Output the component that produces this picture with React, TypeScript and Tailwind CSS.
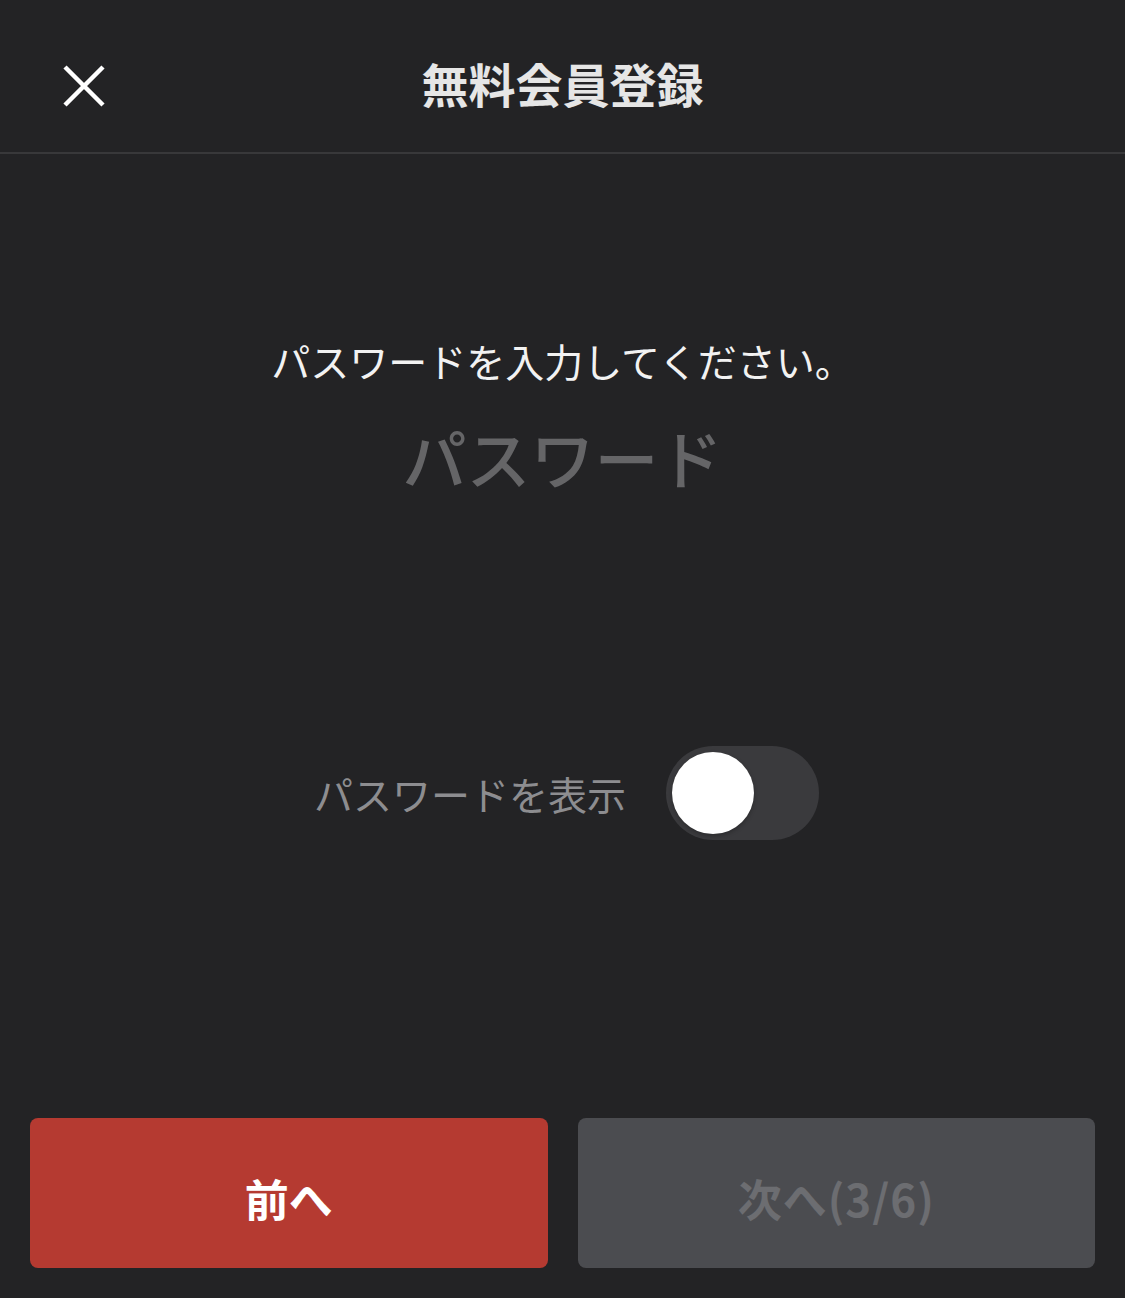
import React from 'react'

function CloseIcon() {
  return (
    <svg width="46" height="46" viewBox="0 0 46 46" fill="none" stroke="currentColor" strokeWidth="4.5" strokeLinecap="butt">
      <path d="M4 4 L42 42 M42 4 L4 42" />
    </svg>
  )
}

export default function App() {
  const font = { fontFamily: '"Noto Sans CJK JP", "Noto Sans", sans-serif' }

  return (
    <div className="h-[1298px] w-full bg-[#232325] flex flex-col text-white" style={font}>
      {/* header */}
      <header className="h-[154px] shrink-0 border-b-2 border-[#38383a] relative flex items-center justify-center pt-[12px]">
        <button className="absolute left-[61px] top-[63px] text-white">
          <CloseIcon />
        </button>
        <h1 className="text-[47px] font-bold text-[#e6e6e6] leading-none">無料会員登録</h1>
      </header>

      {/* body */}
      <main className="flex flex-col items-center pt-[178px]">
        <p className="text-[39px] leading-[56px] text-[#f2f2f2]">パスワードを入力してください。</p>
        <input
          type="password"
          placeholder="パスワード"
          className="mt-[26px] w-full bg-transparent text-center text-[64px] font-medium leading-[84px] outline-none placeholder:text-[#656567] text-white"
        />
        <div className="mt-[248px] flex items-center gap-[40px] pl-[8px]">
          <span className="text-[39px] text-[#8d8d90] leading-none">パスワードを表示</span>
          <div className="w-[153px] h-[94px] rounded-full bg-[#3a3a3d] p-[6px] flex items-center">
            <div className="w-[82px] h-[82px] rounded-full bg-white shadow-[0_2px_4px_rgba(0,0,0,0.25)]" />
          </div>
        </div>
      </main>

      <div className="flex-1" />

      {/* footer buttons */}
      <footer className="flex gap-[30px] px-[30px] pb-[30px]">
        <button className="flex-1 h-[150px] rounded-[8px] bg-[#b53a31] text-[44px] font-bold text-white pt-[10px]">
          前へ
        </button>
        <button className="flex-1 h-[150px] rounded-[8px] bg-[#4b4c50] text-[44px] font-bold text-[#6c6d71] pt-[10px] tracking-[1px]">
          次へ(3/6)
        </button>
      </footer>
    </div>
  )
}
